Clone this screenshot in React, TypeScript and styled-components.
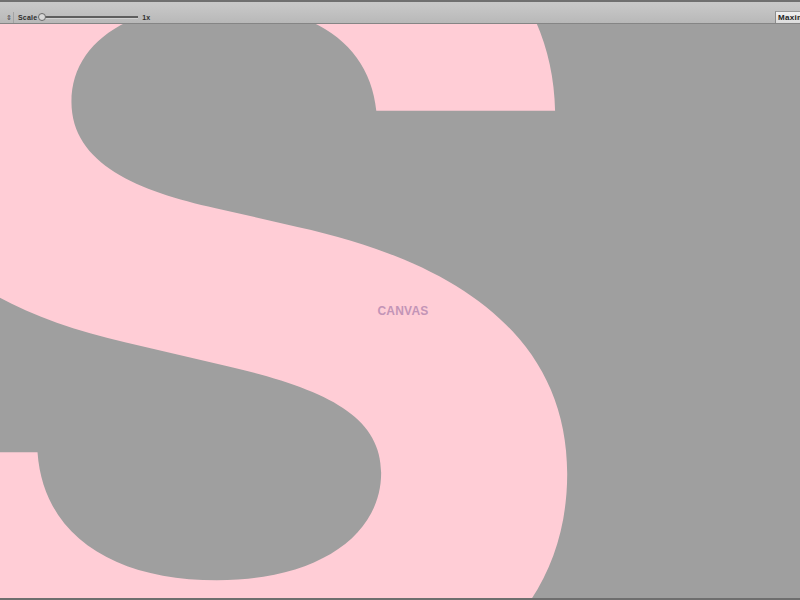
import React from 'react';
import styled, { createGlobalStyle } from 'styled-components';

const GlobalStyle = createGlobalStyle`
  html, body {
    margin: 0;
    padding: 0;
    width: 800px;
    height: 600px;
    overflow: hidden;
    background: #6e6e6e;
    font-family: "Liberation Sans", Arial, sans-serif;
  }
`;

const Window = styled.div`
  width: 800px;
  height: 600px;
  display: flex;
  flex-direction: column;
  background: #6e6e6e;
`;

const TopEdge = styled.div`
  height: 2px;
  background: #6f6f6f;
`;

const Toolbar = styled.div`
  height: 22px;
  display: flex;
  align-items: flex-end;
  box-sizing: border-box;
  background: linear-gradient(#c8c8c8, #c2c2c2 45%, #b8b8b8);
  border-bottom: 1px solid #858585;
`;

const Handle = styled.div`
  width: 9px;
  height: 11px;
  display: flex;
  align-items: center;
  justify-content: center;
  border-right: 1px solid #a3a3a3;
  margin-left: 4px;
  font-size: 7px;
  color: #444;
`;

const Label = styled.span`
  font-size: 7px;
  font-weight: bold;
  color: #2e2e2e;
  margin-left: 4px;
  line-height: 11px;
  letter-spacing: 0.2px;
`;

const Slider = styled.div`
  position: relative;
  width: 96px;
  height: 11px;
  margin-left: 5px;
  display: flex;
  align-items: center;
`;

const Track = styled.div`
  width: 100%;
  height: 2px;
  background: #5e5e5e;
  border-bottom: 1px solid #d0d0d0;
`;

const Thumb = styled.div`
  position: absolute;
  left: -4px;
  top: 1px;
  width: 6px;
  height: 6px;
  border-radius: 50%;
  background: #d8d8d8;
  border: 1px solid #6a6a6a;
`;

const Value = styled.span`
  font-size: 7px;
  color: #2e2e2e;
  margin-left: 4px;
  line-height: 11px;
  font-weight: bold;
`;

const Spacer = styled.div`
  flex: 1;
`;

const ToggleButton = styled.div`
  height: 11px;
  padding: 0 0 0 2px;
  width: 22px;
  overflow: hidden;
  white-space: nowrap;
  font-size: 8px;
  font-weight: bold;
  color: #222;
  line-height: 11px;
  background: linear-gradient(#f0f0f0, #dcdcdc);
  border-left: 1px solid #8c8c8c;
  border-top: 1px solid #9a9a9a;
  letter-spacing: 0.3px;
`;

const Canvas = styled.div`
  position: relative;
  flex: 1;
  overflow: hidden;
  background: #9f9f9f;
  display: flex;
  align-items: center;
  justify-content: center;
  margin-bottom: 2px;
`;

const BigGlyph = styled.div`
  position: absolute;
  left: -194px;
  top: -312px;
  font-family: Inter, "Liberation Sans", Arial, sans-serif;
  font-weight: bold;
  font-size: 1160px;
  line-height: 1;
  color: #ffcdd6;
  transform: scaleX(1.07);
  transform-origin: 0 0;
  filter: blur(0.6px);
`;

const CanvasLabel = styled.span`
  position: relative;
  font-size: 12px;
  font-weight: bold;
  color: #c394b7;
  letter-spacing: 0.2px;
  margin-left: 6px;
`;

export default function App() {
  return (
    <>
      <GlobalStyle />
      <Window>
        <TopEdge />
        <Toolbar>
          <Handle>⇕</Handle>
          <Label>Scale</Label>
          <Slider>
            <Track />
            <Thumb />
          </Slider>
          <Value>1x</Value>
          <Spacer />
          <ToggleButton>Maximize on Play</ToggleButton>
        </Toolbar>
        <Canvas>
          <BigGlyph>S</BigGlyph>
          <CanvasLabel>CANVAS</CanvasLabel>
        </Canvas>
      </Window>
    </>
  );
}
